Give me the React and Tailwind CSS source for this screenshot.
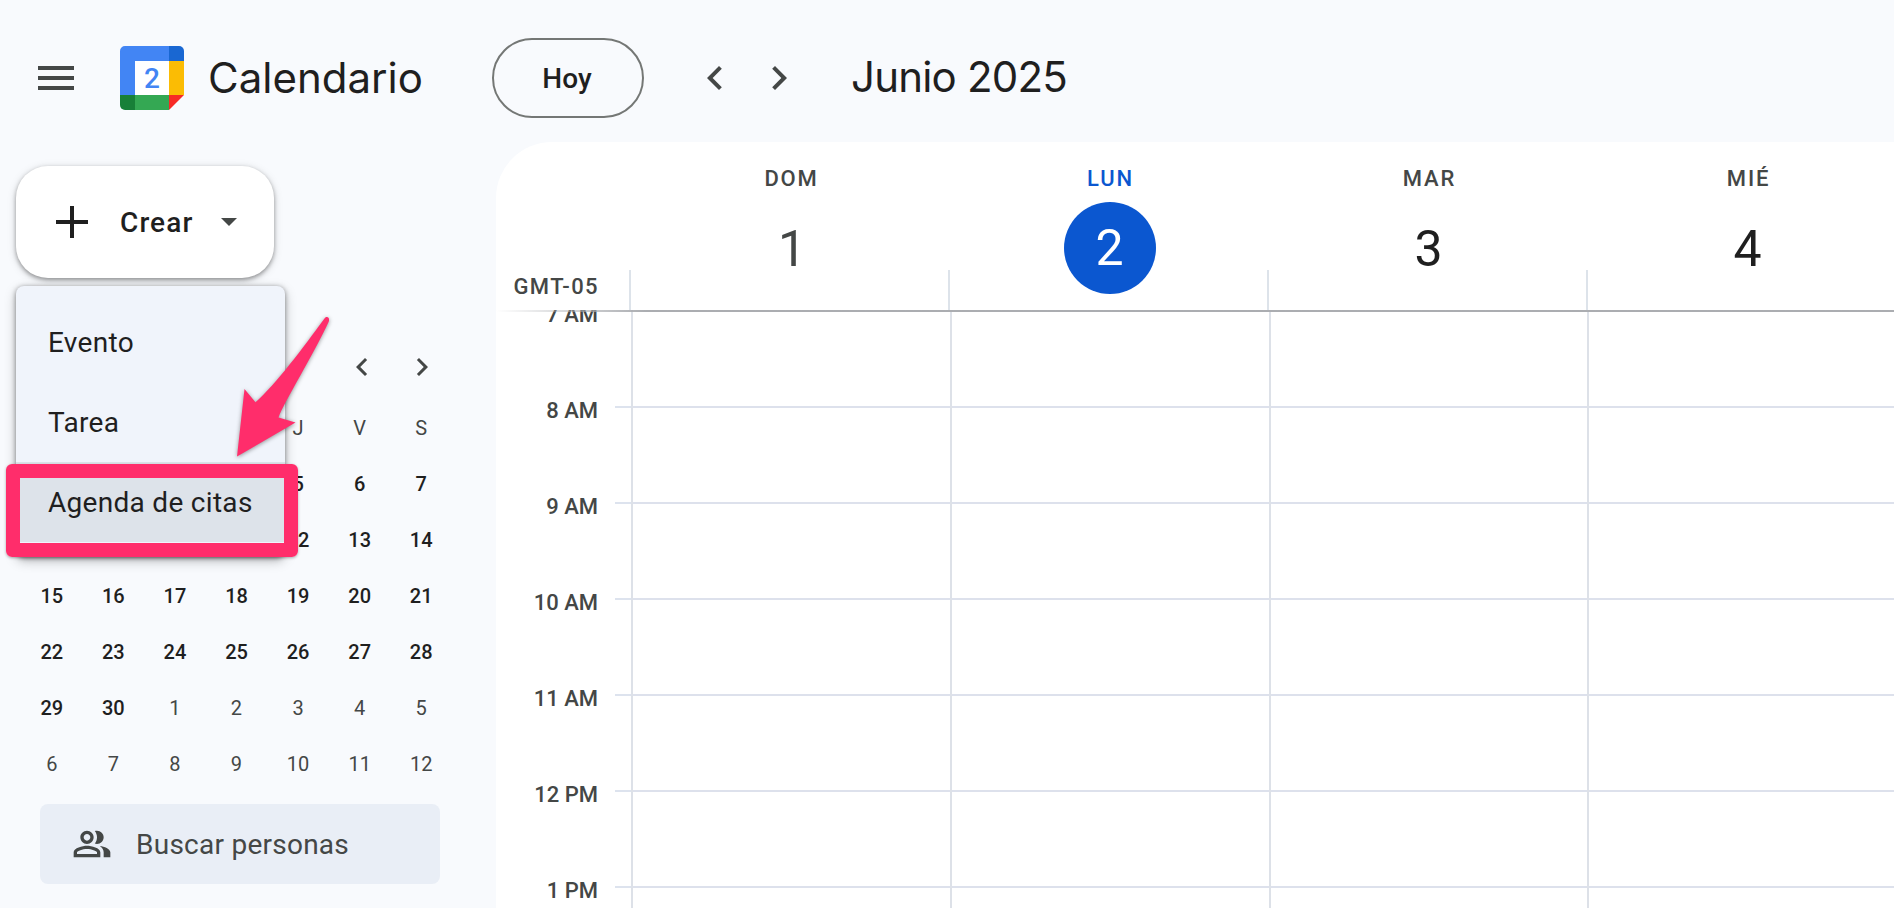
// The open menu lies over the first four columns down to the second week,
// so those cells stay empty.
const WEEKDAYS = ['', '', '', '', 'J', 'V', 'S'];
const MINI_DAYS = [
  ...Array.from({ length: 30 }, (_, i) => ({
    day: i < 14 && i % 7 < 4 ? '' : i + 1,
    current: true,
  })),
  ...Array.from({ length: 12 }, (_, i) => ({ day: i + 1, current: false })),
];
const DAYS = [
  { name: 'DOM', number: 1, state: 'past' },
  { name: 'LUN', number: 2, state: 'today' },
  { name: 'MAR', number: 3, state: 'future' },
  { name: 'MIÉ', number: 4, state: 'future' },
];
const HOURS = ['7 AM', '8 AM', '9 AM', '10 AM', '11 AM', '12 PM', '1 PM'];
const NUMBER_STYLES = {
  past: 'pt-[2px] pl-[3px] text-[#444746]',
  today: 'bg-[#0b57d0] text-white',
  future: 'pt-[2px] text-[#1f1f1f]',
};
const COLUMN_WIDTHS = ['w-[319px]', 'w-[319px]', 'w-[318px]', 'w-[319px]'];

function Icon({ d, className }) {
  return (
    <svg viewBox="0 0 24 24" fill="currentColor" className={className}>
      <path d={d} />
    </svg>
  );
}

const MENU = 'M3 18h18v-2H3v2zm0-5h18v-2H3v2zm0-7v2h18V6H3z';
const LEFT = 'M15.41 7.41L14 6l-6 6 6 6 1.41-1.41L10.83 12z';
const RIGHT = 'M10 6L8.59 7.41 13.17 12l-4.58 4.59L10 18l6-6z';
const PEOPLE =
  'M16.67 13.13C18.04 14.06 19 15.32 19 17v3h4v-3c0-2.18-3.57-3.47-6.33-3.87zM15 12c2.21 0 4-1.79 4-4s-1.79-4-4-4c-.47 0-.91.1-1.33.24C14.5 5.27 15 6.58 15 8s-.5 2.73-1.33 3.76c.42.14.86.24 1.33.24zM9 12c2.21 0 4-1.79 4-4s-1.79-4-4-4-4 1.79-4 4 1.79 4 4 4zm0-6c1.1 0 2 .9 2 2s-.9 2-2 2-2-.9-2-2 .9-2 2-2zm0 7c-2.67 0-8 1.34-8 4v3h16v-3c0-2.66-5.33-4-8-4zm6 5H3v-.99C3.2 16.29 6.3 15 9 15s5.8 1.29 6 2v1z';

function Logo() {
  return (
    <svg viewBox="0 0 64 64" className="ml-10 size-16 shrink-0">
      <path d="M5 0H49V15H15V49H0V5A5 5 0 0 1 5 0Z" fill="#4285f4" />
      <path d="M49 0h10a5 5 0 0 1 5 5v10H49Z" fill="#1967d2" />
      <path d="M49 15h15v34H49Z" fill="#fbbc04" />
      <path d="M15 49h34v15H15Z" fill="#34a853" />
      <path d="M0 49h15v15H5a5 5 0 0 1-5-5Z" fill="#188038" />
      <path d="M49 49h15L49 64Z" fill="#f72a25" />
      <path d="M15 15h34v34H15Z" fill="#fff" />
      <text x="32" y="42" textAnchor="middle" fontSize="28" fontWeight="500" fill="#4285f4">
        2
      </text>
    </svg>
  );
}

function Header() {
  return (
    <header className="flex h-[142px] shrink-0 items-start pt-[38px]">
      <div className="flex h-20 w-[492px] shrink-0 items-center pl-8">
        <Icon d={MENU} className="size-12 text-[#444746]" />
        <Logo />
        <span className="ml-6 font-[Inter,sans-serif] text-[42px] leading-none">Calendario</span>
      </div>
      <button className="flex h-20 w-[152px] items-center justify-center rounded-full border-2 border-[#747775] pt-[2px] pr-[2px] text-[28px] font-medium">
        Hoy
      </button>
      <div className="ml-[47px] flex h-20 items-center gap-4 text-[#444746]">
        <Icon d={LEFT} className="size-12" />
        <Icon d={RIGHT} className="size-12" />
      </div>
      <h1 className="ml-12 flex h-[77px] items-center font-[Inter,sans-serif] text-[42px] tracking-[-0.8px]">
        Junio 2025
      </h1>
    </header>
  );
}

function CreateMenu() {
  const row = 'flex h-20 items-center pt-[2px] pl-8 text-[28px] tracking-[0.3px]';
  return (
    <div className="absolute top-[144px] left-4 h-[271px] w-[269px] rounded-lg bg-[#f0f4fb] pt-4 shadow-[0_4px_12px_rgba(0,0,0,0.25),0_1px_5px_rgba(0,0,0,0.4)]">
      <div className={row}>Evento</div>
      <div className={row}>Tarea</div>
      <div className={row + ' bg-[#dde3ea]'}>Agenda de citas</div>
    </div>
  );
}

function Highlight() {
  return (
    <>
      <div className="absolute top-[322px] left-[6px] h-[93px] w-[292px] rounded-md border-[14px] border-[#ff2d6b] shadow-[0_1px_3px_rgba(0,0,0,0.3)]" />
      <svg
        viewBox="0 0 110 160"
        className="absolute top-[168px] left-[230px] h-[160px] w-[110px] drop-shadow-[0_1px_2px_rgba(0,0,0,0.4)]"
      >
        <path
          d="M7 146.500L14.500 79L25.500 92.300C46 74 73 38 94.500 8.500C97 5.500 100 7.500 98.800 11.500C84 44 54 92 48.500 107.500L65.500 112.500Z"
          fill="#ff2d6b"
        />
      </svg>
    </>
  );
}

function Sidebar() {
  return (
    <aside className="relative flex w-[496px] shrink-0 flex-col pt-6">
      <button className="ml-4 flex h-28 w-[258px] items-center rounded-[32px] bg-white pl-10 shadow-[0_2px_4px_rgba(0,0,0,0.35),0_2px_10px_rgba(0,0,0,0.15)]">
        <svg viewBox="0 0 32 32" className="size-8" fill="#1f1f1f">
          <path d="M14 0h4v14h14v4H18v14h-4V18H0v-4h14z" />
        </svg>
        <span className="ml-8 pt-[2px] text-[28px] font-medium tracking-[1.1px]">Crear</span>
        <svg viewBox="0 0 16 8" className="ml-7 h-2 w-4" fill="#444746">
          <path d="M0 0h16L8 8z" />
        </svg>
      </button>
      <div className="mt-14 flex h-[66px] items-center justify-end gap-6 pr-[56px] text-[#444746]">
        <Icon d={LEFT} className="size-9" />
        <Icon d={RIGHT} className="size-9" />
      </div>
      <div className="ml-[21px] grid w-[431px] grid-cols-7 text-[20px]">
        {WEEKDAYS.map((d, i) => (
          <span key={i} className="flex h-14 items-center justify-center text-[#444746]">
            {d}
          </span>
        ))}
        {MINI_DAYS.map(({ day, current }, i) => (
          <span
            key={i}
            className={
              current
                ? 'flex h-14 items-center justify-center font-medium text-[#1f1f1f]'
                : 'flex h-14 items-center justify-center text-[#444746]'
            }
          >
            {day}
          </span>
        ))}
      </div>
      <div className="mt-3 ml-10 flex h-20 w-[400px] items-center rounded-lg bg-[#e9eef6] pl-8 text-[#444746]">
        <Icon d={PEOPLE} className="size-10" />
        <span className="ml-6 pt-[2px] text-[28px] tracking-[0.25px]">Buscar personas</span>
      </div>
      <CreateMenu />
      <Highlight />
    </aside>
  );
}

function DayHeader({ day }) {
  return (
    <div className="flex w-[319px] shrink-0">
      <span className="h-10 w-[2px] self-end bg-[#dde3ea]" />
      <div className="flex flex-1 flex-col items-center pt-5 pl-[2px]">
        <span
          className={
            day.state === 'today'
              ? 'flex h-8 items-center pl-[2px] text-[22px] font-medium tracking-[1.8px] text-[#0b57d0]'
              : 'flex h-8 items-center pl-[2px] text-[22px] font-medium tracking-[1.8px] text-[#444746]'
          }
        >
          {day.name}
        </span>
        <span
          className={
            'mt-2 flex size-[92px] items-center justify-center rounded-full text-[50px] ' +
            NUMBER_STYLES[day.state]
          }
        >
          {day.number}
        </span>
      </div>
    </div>
  );
}

function WeekView() {
  return (
    <main className="flex min-w-0 flex-1 flex-col overflow-hidden rounded-tl-[56px] bg-white">
      <div className="flex h-[168px] shrink-0">
        <div className="flex w-[133px] shrink-0 items-end justify-end pr-[30px] pb-[7px] text-[22px] leading-8 font-medium tracking-[1.4px] text-[#444746]">
          GMT-05
        </div>
        {DAYS.map((day) => (
          <DayHeader key={day.name} day={day} />
        ))}
      </div>
      <div className="relative flex min-h-0 flex-1 overflow-hidden">
        <div className="-mt-[43px] flex w-[119px] shrink-0 flex-col pr-[17px] text-right text-[22px] font-medium text-[#444746]">
          {HOURS.map((hour) => (
            <span key={hour} className="h-24 shrink-0 leading-[96px]">
              {hour}
            </span>
          ))}
        </div>
        <div className="w-4 shrink-0 pt-[2px]">
          {HOURS.map((hour) => (
            <div key={hour} className="h-24 border-b-2 border-[#dde3ee]" />
          ))}
        </div>
        {DAYS.map((day, i) => (
          <div key={day.name} className={'shrink-0 border-l-2 border-[#dde1e8] pt-[2px] ' + COLUMN_WIDTHS[i]}>
            {HOURS.map((hour) => (
              <div key={hour} className="h-24 border-b-2 border-[#dde1ec]" />
            ))}
          </div>
        ))}
        <div className="absolute inset-x-0 top-0 h-[2px] bg-linear-to-r from-transparent to-[#abadb1] to-[150px]" />
      </div>
    </main>
  );
}

export default function App() {
  return (
    <div className="flex h-[908px] w-full flex-col overflow-hidden bg-[#f8fafd] font-[Roboto,sans-serif] text-[#1f1f1f]">
      <Header />
      <div className="flex min-h-0 flex-1">
        <Sidebar />
        <WeekView />
      </div>
    </div>
  );
}
